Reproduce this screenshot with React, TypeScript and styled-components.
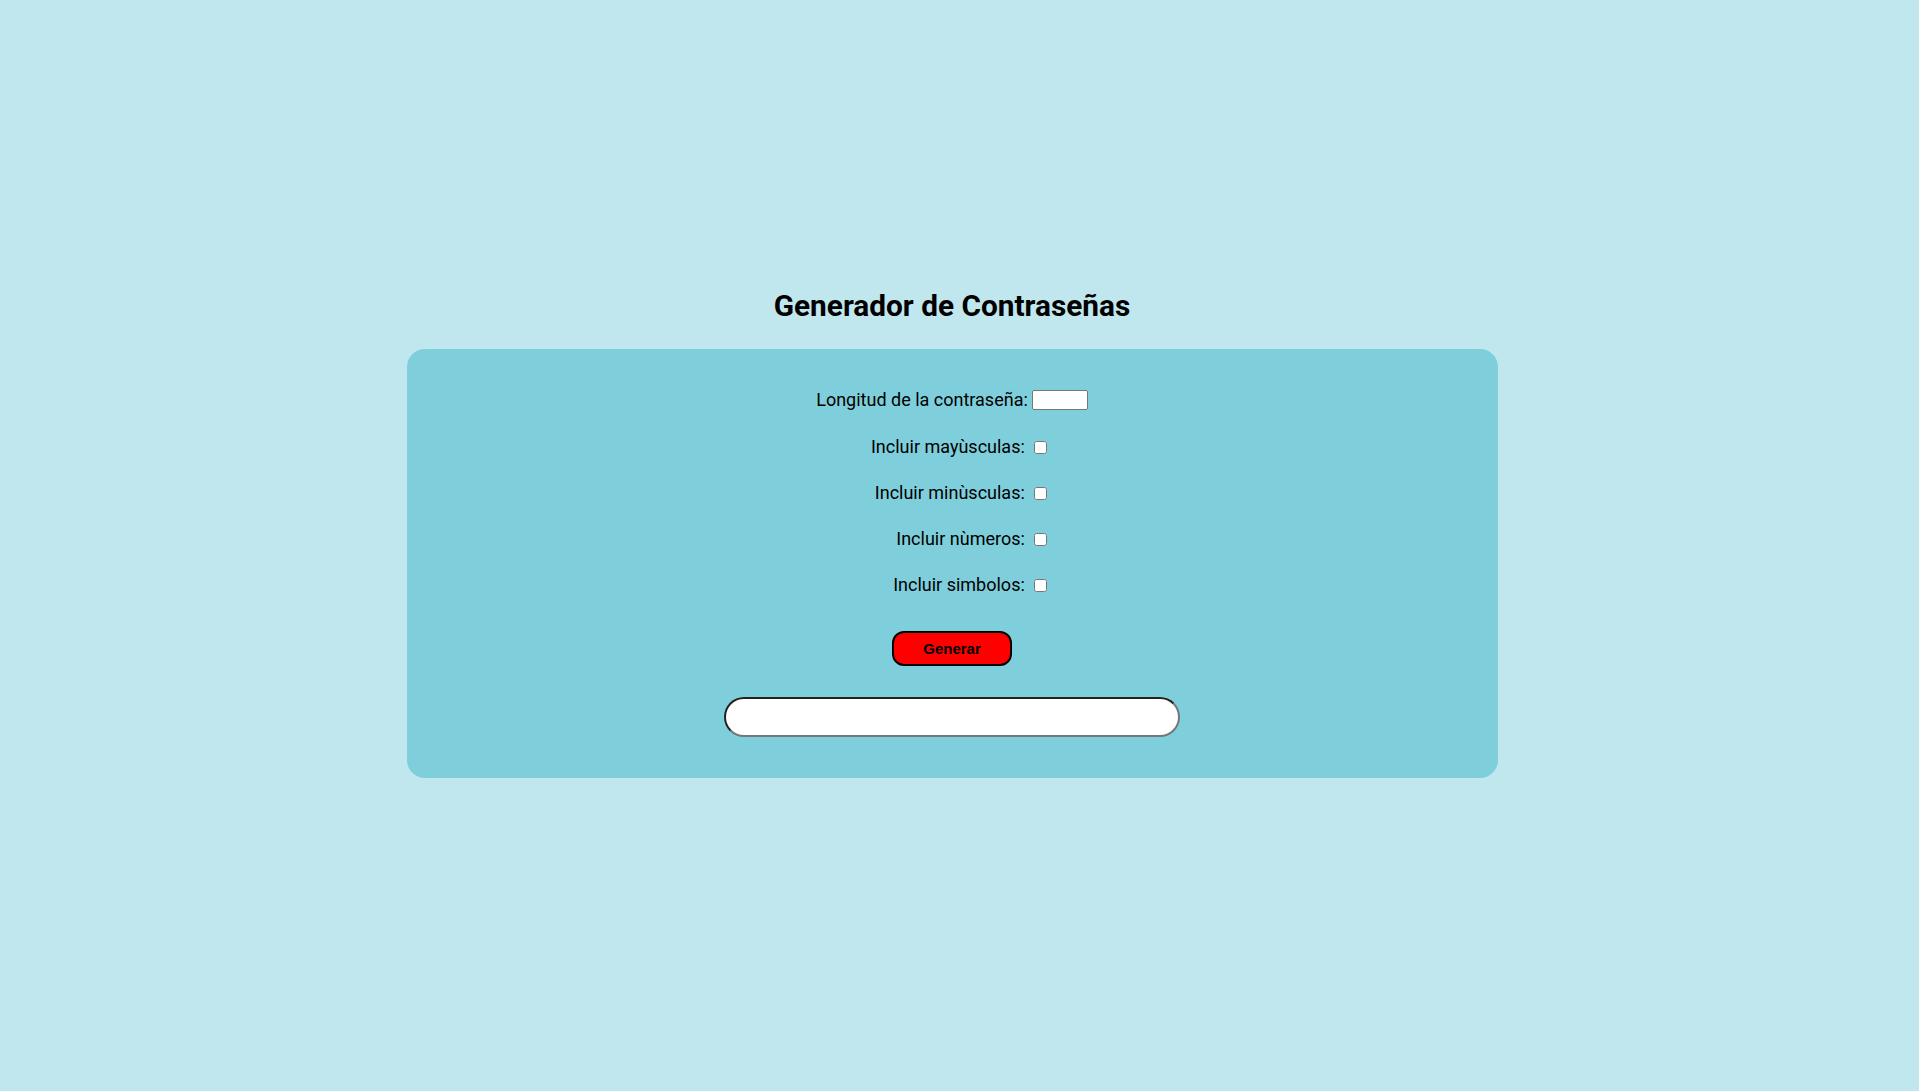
import React from "react";
import styled, { createGlobalStyle } from "styled-components";

const GlobalStyle = createGlobalStyle`
  html, body {
    background: #c0e7ee;
  }
  body {
    margin: 8px;
    height: 100vh;
    font-family: Roboto, "Liberation Sans", sans-serif;
    color: #000;
  }
  #root {
    height: 100%;
  }
`;

const Page = styled.main`
  display: flex;
  flex-direction: column;
  align-items: center;
  padding-top: 280px;
  margin-right: 15px;
`;

const Title = styled.h1`
  margin: 0 0 26px;
  font-family: Roboto, sans-serif;
  font-weight: 700;
  font-size: 29.8px;
  line-height: 35px;
  text-align: center;
`;

const Card = styled.section`
  width: 1091px;
  box-sizing: border-box;
  background: #7ecfdb;
  border-radius: 18px;
  padding: 39px 0 41px;
  display: flex;
  flex-direction: column;
  align-items: center;
`;

const Options = styled.div`
  display: grid;
  grid-template-columns: auto auto;
  grid-template-rows: 24px repeat(4, 22px);
  justify-content: center;
  align-items: center;
  column-gap: 4px;
  row-gap: 24px;
`;

const Label = styled.label<{ $inset?: boolean }>`
  font-size: 18px;
  line-height: 22px;
  text-align: right;
  white-space: nowrap;
  padding-right: ${(p) => (p.$inset ? "3px" : "0")};
`;

const Control = styled.div`
  display: flex;
  align-items: center;
  justify-content: flex-start;
`;

const LengthInput = styled.input`
  box-sizing: border-box;
  width: 56px;
  height: 20px;
  margin: 0;
`;

const Check = styled.input`
  margin: 0 3px 0 2px;
`;

const GenerateButton = styled.button`
  margin-top: 35px;
  width: 120px;
  height: 35px;
  box-sizing: border-box;
  background: #ff0000;
  border: 2px solid #000;
  border-radius: 12px;
  font-family: "Liberation Sans", Arial, sans-serif;
  font-weight: 700;
  font-size: 15px;
  color: #000;
  cursor: pointer;
`;

const Output = styled.input`
  margin-top: 31px;
  box-sizing: border-box;
  width: 456px;
  height: 40px;
  border-radius: 20px;
  background: #fff;
  font-size: 16px;
  padding: 0 16px;
`;

const options = [
  { id: "upper", label: "Incluir mayùsculas:" },
  { id: "lower", label: "Incluir minùsculas:" },
  { id: "numbers", label: "Incluir nùmeros:" },
  { id: "symbols", label: "Incluir simbolos:" },
];

export default function App() {
  return (
    <>
      <GlobalStyle />
      <Page>
        <Title>Generador de Contraseñas</Title>
        <Card>
          <Options>
            <Label htmlFor="length">Longitud de la contraseña:</Label>
            <Control>
              <LengthInput id="length" type="number" />
            </Control>
            {options.map((o) => (
              <React.Fragment key={o.id}>
                <Label $inset htmlFor={o.id}>
                  {o.label}
                </Label>
                <Control>
                  <Check id={o.id} type="checkbox" />
                </Control>
              </React.Fragment>
            ))}
          </Options>
          <GenerateButton>Generar</GenerateButton>
          <Output type="text" readOnly aria-label="Contraseña generada" />
        </Card>
      </Page>
    </>
  );
}
